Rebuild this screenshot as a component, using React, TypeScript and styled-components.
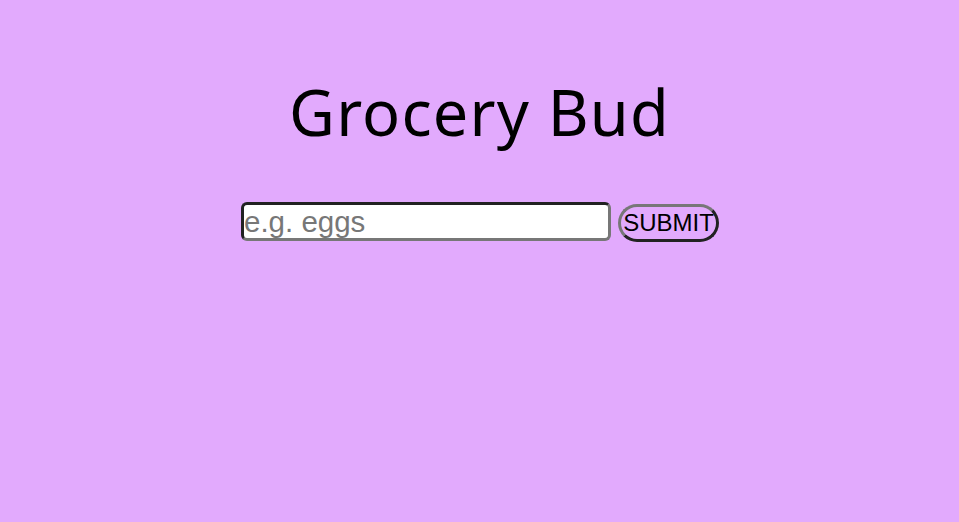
import React from "react";
import styled, { createGlobalStyle } from "styled-components";

const Global = createGlobalStyle`
  html, body { margin: 0; padding: 0; }
  body { background: #e2aafd; font-family: "Liberation Sans", Arial, sans-serif; }
`;

const Page = styled.main`
  min-height: 522px;
  display: flex;
  flex-direction: column;
  align-items: center;
  padding-top: 72px;
  box-sizing: border-box;
`;

const Title = styled.h1`
  margin: 0;
  font-family: "Noto Sans", "Open Sans", sans-serif;
  font-weight: 400;
  font-size: 63px;
  line-height: 80px;
  color: #000;
  letter-spacing: 1.2px;
`;

const Form = styled.form`
  margin-top: 50px;
  display: flex;
  align-items: flex-start;
  gap: 7px;
  padding-left: 1px;
`;

const Input = styled.input`
  width: 370px;
  height: 39px;
  box-sizing: border-box;
  border: 3px solid;
  border-color: #222 #777 #777 #222;
  border-radius: 6px;
  background: #fff;
  padding: 0;
  font-family: "Liberation Sans", Arial, sans-serif;
  font-size: 29.5px;
  color: #000;
  outline: none;
  &::placeholder { color: #777; }
`;

const Button = styled.button`
  width: 101px;
  height: 38px;
  margin-top: 2px;
  box-sizing: border-box;
  border: 3px solid;
  border-color: #777 #222 #222 #777;
  border-radius: 19px;
  background: transparent;
  padding: 0;
  font-family: "Liberation Sans", Arial, sans-serif;
  font-size: 24px;
  color: #000;
  cursor: pointer;
`;

export default function App() {
  return (
    <>
      <Global />
      <Page>
        <Title>Grocery Bud</Title>
        <Form onSubmit={(e) => e.preventDefault()}>
          <Input type="text" placeholder="e.g. eggs" />
          <Button type="submit">SUBMIT</Button>
        </Form>
      </Page>
    </>
  );
}
